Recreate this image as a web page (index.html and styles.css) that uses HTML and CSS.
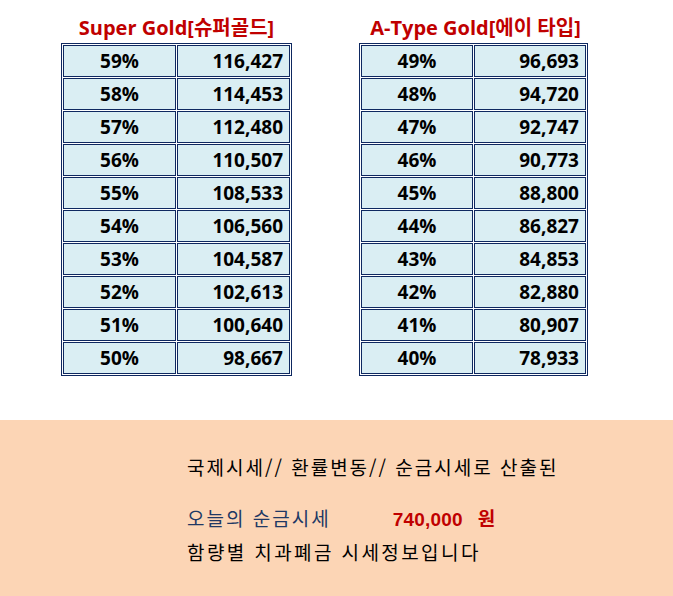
FILE: index.html
```html
<!DOCTYPE html>
<html lang="ko">
<head>
<meta charset="utf-8">
<link rel="stylesheet" href="styles.css">
</head>
<body>
<div class="tables">
  <section class="block block-left">
    <h2 class="title">Super Gold[슈퍼골드]</h2>
    <table class="rates">
      <tr><td class="pct">59%</td><td class="val">116,427</td></tr>
      <tr><td class="pct">58%</td><td class="val">114,453</td></tr>
      <tr><td class="pct">57%</td><td class="val">112,480</td></tr>
      <tr><td class="pct">56%</td><td class="val">110,507</td></tr>
      <tr><td class="pct">55%</td><td class="val">108,533</td></tr>
      <tr><td class="pct">54%</td><td class="val">106,560</td></tr>
      <tr><td class="pct">53%</td><td class="val">104,587</td></tr>
      <tr><td class="pct">52%</td><td class="val">102,613</td></tr>
      <tr><td class="pct">51%</td><td class="val">100,640</td></tr>
      <tr><td class="pct">50%</td><td class="val">98,667</td></tr>
    </table>
  </section>
  <section class="block block-right">
    <h2 class="title">A-Type Gold[에이 타입]</h2>
    <table class="rates">
      <tr><td class="pct">49%</td><td class="val">96,693</td></tr>
      <tr><td class="pct">48%</td><td class="val">94,720</td></tr>
      <tr><td class="pct">47%</td><td class="val">92,747</td></tr>
      <tr><td class="pct">46%</td><td class="val">90,773</td></tr>
      <tr><td class="pct">45%</td><td class="val">88,800</td></tr>
      <tr><td class="pct">44%</td><td class="val">86,827</td></tr>
      <tr><td class="pct">43%</td><td class="val">84,853</td></tr>
      <tr><td class="pct">42%</td><td class="val">82,880</td></tr>
      <tr><td class="pct">41%</td><td class="val">80,907</td></tr>
      <tr><td class="pct">40%</td><td class="val">78,933</td></tr>
    </table>
  </section>
</div>
<div class="band">
  <p class="line line1">국제시세// 환률변동// 순금시세로 산출된</p>
  <p class="line line2"><span class="today">오늘의 순금시세</span><span class="price">740,000</span><span class="won">원</span></p>
  <p class="line line3">함량별 치과폐금 시세정보입니다</p>
</div>
</body>
</html>
```
FILE: styles.css
```css
html, body {
  margin: 0;
  padding: 0;
  background: #ffffff;
}
body {
  width: 673px;
  height: 596px;
  overflow: hidden;
  font-family: "Open Sans", "Noto Sans CJK KR", sans-serif;
}
.tables {
  display: flex;
  align-items: flex-start;
  padding: 15px 0 0 61px;
  gap: 67px;
  height: 420px;
  box-sizing: border-box;
}
.block {
  display: flex;
  flex-direction: column;
  align-items: center;
}
.title {
  margin: 0 0 2px 0;
  font-size: 20px;
  line-height: 26px;
  font-weight: 700;
  color: #c00000;
  white-space: nowrap;
  font-family: "Open Sans", "Noto Sans CJK KR", sans-serif;
}
.block-right .title { margin-left: 4px; }
.rates {
  border-collapse: separate;
  border-spacing: 1px;
  border: 1px solid #0e2860;
}
.rates td {
  border: 1px solid #0e2860;
  background: #daeef3;
  height: 30px;
  padding: 0;
  font-size: 19px;
  font-weight: 700;
  color: #000;
  line-height: 30px;
  box-sizing: content-box;
}
.block-left .rates td { width: 111px; }
.block-right .rates td { width: 110px; }
.rates .pct { text-align: center; }
.rates .val { text-align: right; padding-right: 6px; }
.block-left .rates .val { width: 105px; }
.block-right .rates .val { width: 104px; }

.band {
  background: #fcd5b5;
  height: 176px;
  box-sizing: border-box;
  padding: 35px 0 0 187px;
  font-family: "Noto Sans CJK KR", sans-serif;
}
.line {
  margin: 0;
  font-size: 19px;
  line-height: 24px;
  letter-spacing: 2px;
  color: #000;
  white-space: nowrap;
}
.line2 { margin-top: 27px; }
.line3 { margin-top: 8px; }
.line3 { letter-spacing: 2.4px; }
.today { color: #203864; }
.price {
  display: inline-block;
  margin-left: 62px;
  color: #c00000;
  font-weight: 700;
  font-family: "Liberation Sans", sans-serif;
  font-size: 19px;
  letter-spacing: 0.2px;
}
.won {
  display: inline-block;
  margin-left: 15px;
  color: #c00000;
  font-weight: 700;
  font-size: 19px;
}
```
